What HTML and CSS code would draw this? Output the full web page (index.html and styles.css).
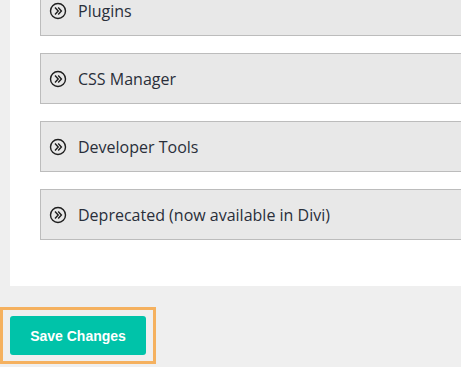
FILE: index.html
```html
<!DOCTYPE html>
<html lang="en">

<head>
    <meta charset="UTF-8">
    <title>Settings</title>
    <link rel="stylesheet" href="styles.css">
</head>

<body>
    <div class="panel">
        <div class="toggle-row">
            <svg class="toggle-icon" viewBox="0 0 18 18"><circle cx="9" cy="9" r="7.5"/><path d="M6 5.5l3.2 3.5-3.2 3.5M9.2 5.5l3.2 3.5-3.2 3.5"/></svg>
            <span>Plugins</span>
        </div>
        <div class="toggle-row">
            <svg class="toggle-icon" viewBox="0 0 18 18"><circle cx="9" cy="9" r="7.5"/><path d="M6 5.5l3.2 3.5-3.2 3.5M9.2 5.5l3.2 3.5-3.2 3.5"/></svg>
            <span>CSS Manager</span>
        </div>
        <div class="toggle-row">
            <svg class="toggle-icon" viewBox="0 0 18 18"><circle cx="9" cy="9" r="7.5"/><path d="M6 5.5l3.2 3.5-3.2 3.5M9.2 5.5l3.2 3.5-3.2 3.5"/></svg>
            <span>Developer Tools</span>
        </div>
        <div class="toggle-row">
            <svg class="toggle-icon" viewBox="0 0 18 18"><circle cx="9" cy="9" r="7.5"/><path d="M6 5.5l3.2 3.5-3.2 3.5M9.2 5.5l3.2 3.5-3.2 3.5"/></svg>
            <span>Deprecated (now available in Divi)</span>
        </div>
    </div>
    <div class="save-wrap">
        <button type="submit" class="save-button">Save Changes</button>
    </div>
</body>
</html>
```

FILE: styles.css
```css
body {
    margin: 0;
    padding: 0;
    background-color: #efefef;
    font-family: "Open Sans", "Noto Sans", sans-serif;
    overflow: hidden;
}

.panel {
    margin: -15px 0 0 10px;
    padding: 0 0 46px 30px;
    background-color: #fff;
    display: flex;
    flex-direction: column;
    gap: 17px;
}

.toggle-row {
    display: flex;
    align-items: center;
    gap: 11px;
    height: 49px;
    margin-right: -20px;
    padding-left: 8px;
    background-color: #e8e8e8;
    border: 1px solid #bcbcbc;
    color: #2a2f3a;
    font-size: 16px;
}

.toggle-icon {
    width: 18px;
    height: 18px;
    fill: none;
    stroke: #1e1e1e;
    stroke-width: 1.4;
}

.save-wrap {
    display: inline-block;
    margin-top: 21px;
    padding: 6px 7px;
    border: 3px solid #f5b15f;
}

.save-button {
    display: block;
    width: 136px;
    height: 39px;
    background-color: #00c3a9;
    color: #fff;
    border: none;
    border-radius: 3px;
    font-family: "Liberation Sans", Arial, sans-serif;
    font-weight: bold;
    font-size: 14px;
    cursor: pointer;
}
```
